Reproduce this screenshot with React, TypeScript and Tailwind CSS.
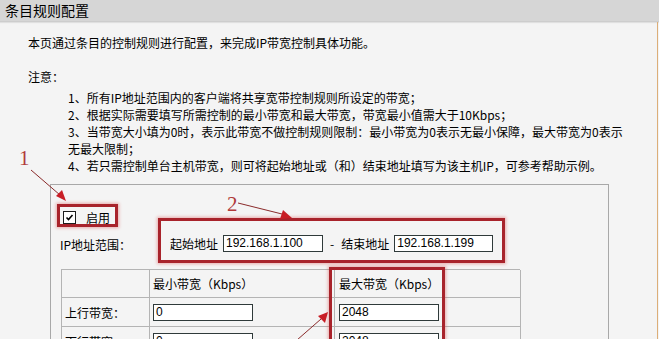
import React from "react";

const cjk = { fontFamily: '"Noto Sans CJK SC", "Noto Sans", sans-serif' };
const arial = { fontFamily: '"Liberation Sans", Arial, sans-serif' };

function Input({ value, w }: { value: string; w: string }) {
  return (
    <div
      className={`h-[17px] ${w} border border-[#2f3a3a] bg-white px-[2px] text-[12px] leading-[15px] text-black`}
      style={arial}
    >
      {value}
    </div>
  );
}

function RedBox({ className }: { className: string }) {
  return (
    <div
      className={`pointer-events-none absolute border-[3px] border-[#a8232b] shadow-[0_0_3px_1px_rgba(220,80,80,0.45)] ${className}`}
    />
  );
}

export default function App() {
  return (
    <div
      className="relative h-[339px] w-[659px] overflow-hidden bg-[#f4f4f4] text-[12px] leading-[17px] text-black"
      style={cjk}
    >
      {/* header */}
      <div className="h-[22px] bg-[#d6d6d6] pl-[5px] text-[14px] leading-[21px] shadow-[0_1px_1px_rgba(0,0,0,0.08)] border-b border-[#cdcdcd]">
        条目规则配置
      </div>
      {/* right tan border */}
      <div className="absolute right-[1px] top-[22px] bottom-0 w-[1px] bg-[#dcae78]" />

      <div className="pl-[28px] pt-[12px]">
        <div>本页通过条目的控制规则进行配置，来完成IP带宽控制具体功能。</div>
        <div className="mt-[17px]">注意：</div>
        <div className="ml-[40px] mt-[4px]">
          <div>1、所有IP地址范围内的客户端将共享宽带控制规则所设定的带宽；</div>
          <div>2、根据实际需要填写所需控制的最小带宽和最大带宽，带宽最小值需大于10Kbps；</div>
          <div>3、当带宽大小填为0时，表示此带宽不做控制规则限制：最小带宽为0表示无最小保障，最大带宽为0表示</div>
          <div>无最大限制；</div>
          <div>4、若只需控制单台主机带宽，则可将起始地址或（和）结束地址填写为该主机IP，可参考帮助示例。</div>
        </div>
      </div>

      {/* settings box */}
      <div className="ml-[50px] mt-[10px] h-[200px] w-[559px] border border-[#a8a8a8] pl-[12px] pt-[22px]">
        {/* enable */}
        <div className="relative flex h-[20px] w-[54px] items-center">
          <RedBox className="-left-[6px] -top-[3px] h-[23px] w-[61px]" />
          <div className="flex h-[13px] w-[13px] items-center justify-center border border-[#1c1c1c] bg-white">
            <svg width="9" height="9" viewBox="0 0 9 9">
              <path d="M1.5 4.5 L3.5 6.5 L7.5 2" stroke="#000" strokeWidth="1.6" fill="none" />
            </svg>
          </div>
          <span className="ml-[10px]">启用</span>
        </div>

        {/* IP range */}
        <div className="mt-[8px] flex h-[17px] items-center">
          <span className="w-[110px] -ml-[3px] pt-[2px]">IP地址范围：</span>
          <div className="relative flex items-center">
            <RedBox className="-left-[12px] -top-[17px] h-[45px] w-[347px]" />
            <span className="mr-[5px]">起始地址</span>
            <Input value="192.168.1.100" w="w-[100px]" />
            <span className="mx-[7px]">-</span>
            <span className="mr-[5px]">结束地址</span>
            <Input value="192.168.1.199" w="w-[99px]" />
          </div>
        </div>

        {/* table */}
        <div className="relative mt-[17px] -ml-[2px]">
          <RedBox className="left-[268px] -top-[2px] h-[80px] w-[116px]" />
          <div className="grid w-[459px] grid-cols-[88px_185px_186px] border-l border-t border-[#b4b4b4]">
            <div className="h-[28px] border-b border-r border-[#b4b4b4]" />
            <div className="flex h-[28px] items-center border-b border-r border-[#b4b4b4] pl-[3px]">最小带宽（Kbps）</div>
            <div className="flex h-[28px] items-center border-b border-r border-[#b4b4b4] pl-[4px]">最大带宽（Kbps）</div>

            <div className="flex h-[29px] items-center border-b border-r border-[#b4b4b4] pl-[3px]">上行带宽：</div>
            <div className="flex h-[29px] items-center border-b border-r border-[#b4b4b4] pl-[3px]">
              <Input value="0" w="w-[100px]" />
            </div>
            <div className="flex h-[29px] items-center border-b border-r border-[#b4b4b4] pl-[4px]">
              <Input value="2048" w="w-[100px]" />
            </div>

            <div className="flex h-[29px] items-center border-b border-r border-[#b4b4b4] pl-[3px]">下行带宽：</div>
            <div className="flex h-[29px] items-center border-b border-r border-[#b4b4b4] pl-[3px]">
              <Input value="0" w="w-[100px]" />
            </div>
            <div className="flex h-[29px] items-center border-b border-r border-[#b4b4b4] pl-[4px]">
              <Input value="2048" w="w-[100px]" />
            </div>
          </div>
        </div>
      </div>

      {/* annotations */}
      <span
        className="absolute left-[19px] top-[147px] text-[21px] leading-[22px] text-[#b03a3a]"
        style={{ fontFamily: '"Liberation Serif", serif' }}
      >
        1
      </span>
      <span
        className="absolute left-[227px] top-[193px] text-[21px] leading-[22px] text-[#b03a3a]"
        style={{ fontFamily: '"Liberation Serif", serif' }}
      >
        2
      </span>
      <svg className="pointer-events-none absolute left-0 top-0" width="659" height="339">
        <g stroke="#8a2a2a" strokeWidth="1" fill="#c81e26">
          <line x1="31" y1="170" x2="60" y2="195" />
          <polygon points="66,201 56,196 62,190" stroke="none" />
          <line x1="238" y1="203" x2="282" y2="214" />
          <polygon points="292,218 280,219 283,210" stroke="none" />
          <line x1="297" y1="340" x2="321" y2="319" />
          <polygon points="328,312 325,323 318,316" stroke="none" />
        </g>
      </svg>
    </div>
  );
}
